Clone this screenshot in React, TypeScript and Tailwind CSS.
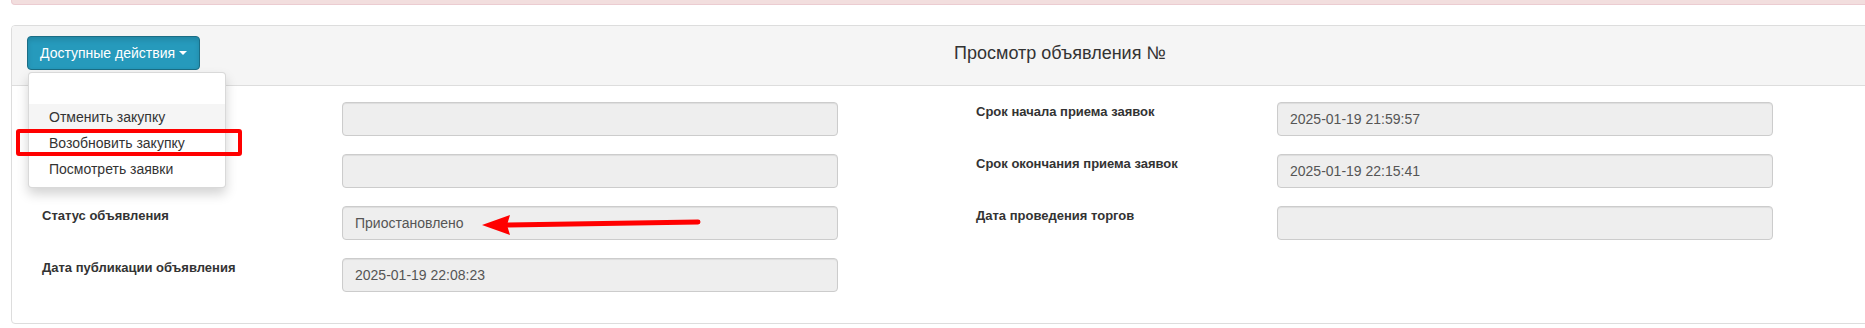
import React from 'react';

const leftRows = [
    {label: '', value: ''},
    {label: '', value: ''},
    {label: 'Статус объявления', value: 'Приостановлено'},
    {label: 'Дата публикации объявления', value: '2025-01-19 22:08:23'},
];

const rightRows = [
    {label: 'Срок начала приема заявок', value: '2025-01-19 21:59:57'},
    {label: 'Срок окончания приема заявок', value: '2025-01-19 22:15:41'},
    {label: 'Дата проведения торгов', value: ''},
];

function FieldRow(props: {label: string; value: string; labelWidth: string}) {
    return (
        <div className="flex items-start">
            <div className={`${props.labelWidth} shrink-0 text-[13px] leading-5 font-bold text-[#333]`}>
                {props.label}
            </div>
            <div className="w-[496px] h-[34px] shrink-0 rounded-[4px] border border-[#ccc] bg-[#eee] px-3 py-[6px] text-[14px] leading-5 text-[#555] shadow-[inset_0_1px_1px_rgba(0,0,0,0.075)]">
                {props.value}
            </div>
        </div>
    );
}

function ActionsMenu() {
    const items = ['', 'Отменить закупку', 'Возобновить закупку', 'Посмотреть заявки'];
    return (
        <div className="absolute left-[28px] top-[72px] w-[198px] rounded-[4px] border border-[rgba(0,0,0,0.15)] bg-white py-[5px] shadow-[0_6px_12px_rgba(0,0,0,0.175)]">
            {items.map((item, i) => (
                <div
                    key={i}
                    className={`h-[26px] px-5 py-[3px] text-[14px] leading-5 text-[#333] whitespace-nowrap ${i === 1 ? 'bg-[#f5f5f5]' : ''}`}
                >
                    {item}
                </div>
            ))}
        </div>
    );
}

export default function App() {
    return (
        <div className="relative w-[1865px] h-[328px] overflow-hidden bg-white font-['Liberation_Sans',Arial,sans-serif]">
            {/* alert strip cut off at the top */}
            <div className="ml-[11px] w-[2000px] h-[5px] rounded-b-[4px] bg-[#f2dede] border border-t-0 border-[#ebccd1]"></div>

            <div className="ml-[11px] mt-[20px] w-[2100px] rounded-[4px] border border-[#ddd] bg-white">
                <div className="flex items-center h-[60px] px-[15px] pt-[10px] pb-[16px] bg-[#f5f5f5] border-b border-[#ddd] rounded-t-[3px]">
                    <button className="h-[34px] shrink-0 flex items-center rounded-[4px] border border-[#1b6d85] bg-[#269abc] px-3 text-[14px] leading-5 text-white shadow-[inset_0_3px_5px_rgba(0,0,0,0.125)]">
                        Доступные действия
                        <span className="ml-[4px] w-0 h-0 border-t-[4px] border-t-white border-x-[4px] border-x-transparent"></span>
                    </button>
                    <h4 className="ml-[754px] text-[18px] leading-[20px] text-[#333]">Просмотр объявления №</h4>
                </div>

                <div className="flex pt-[16px] pb-[31px] pl-[30px]">
                    <div className="flex flex-col gap-[18px]">
                        {leftRows.map((r, i) => (
                            <FieldRow key={i} label={r.label} value={r.value} labelWidth="w-[300px]"/>
                        ))}
                    </div>
                    <div className="ml-[138px] flex flex-col gap-[18px]">
                        {rightRows.map((r, i) => (
                            <FieldRow key={i} label={r.label} value={r.value} labelWidth="w-[301px]"/>
                        ))}
                    </div>
                </div>
            </div>

            <ActionsMenu/>

            {/* annotation: red frame around the menu item */}
            <div className="absolute left-[16px] top-[129px] w-[226px] h-[27px] border-4 border-[#ff0000] rounded-[3px]"></div>

            {/* annotation: red arrow pointing to the status */}
            <svg className="absolute left-0 top-0 pointer-events-none" width="1865" height="328" viewBox="0 0 1865 328">
                <line x1="505" y1="225" x2="698" y2="222" stroke="#ff0000" strokeWidth="5" strokeLinecap="round"/>
                <polygon points="482,225 510,215 507,225 510,235" fill="#ff0000"/>
            </svg>
        </div>
    );
}
